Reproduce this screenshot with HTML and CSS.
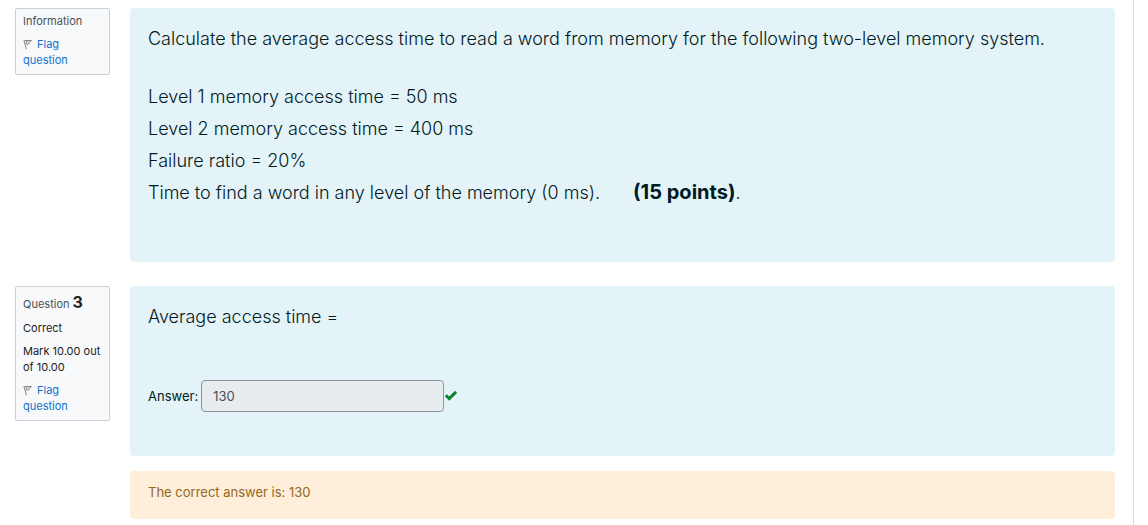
FILE: index.html
```html
<!DOCTYPE html>
<html lang="en">
<head>
<meta charset="utf-8">
<meta name="viewport" content="width=device-width, initial-scale=1">
<title>Quiz review</title>
<link rel="stylesheet" href="styles.css">
</head>
<body>
<main class="page">
  <section class="question">
    <aside class="info">
      <h3 class="info-title">Information</h3>
      <a class="flag" href="#"><svg class="flag-icon" viewBox="0 0 10 11" aria-hidden="true"><path class="cloth" d="M1.4 1.5H8.4L4.2 6.2" /><path d="M.9 1.2 3.4 10.2M4 2.2 3 5.4" /></svg>Flag question</a>
    </aside>
    <div class="content">
      <div class="formulation description">
        <p class="lead">Calculate the average access time to read a word from memory for the following two-level memory system.</p>
        <p class="lead">Level 1 memory access time = 50 ms<br>Level 2 memory access time = 400 ms<br>Failure ratio = 20%<br>Time to find a word in any level of the memory (0 ms). <strong class="points">(15 points)</strong>.</p>
      </div>
    </div>
  </section>
  <section class="question">
    <aside class="info">
      <h3 class="info-title numbered">Question <span class="number">3</span></h3>
      <div>Correct</div>
      <div>Mark 10.00 out of 10.00</div>
      <a class="flag" href="#"><svg class="flag-icon" viewBox="0 0 10 11" aria-hidden="true"><path class="cloth" d="M1.4 1.5H8.4L4.2 6.2" /><path d="M.9 1.2 3.4 10.2M4 2.2 3 5.4" /></svg>Flag question</a>
    </aside>
    <div class="content">
      <div class="formulation response">
        <p class="lead">Average access time =</p>
        <div class="answer">
          <label for="answer">Answer:</label>
          <input id="answer" class="answer-input" type="text" value="130" readonly>
          <svg class="check" viewBox="0 0 14 12" role="img" aria-label="Correct"><path d="M.8 6.2 2.8 4.2 5.2 6.6 11 .8 13.1 2.9 5.2 10.8Z" /></svg>
        </div>
      </div>
      <div class="outcome">The correct answer is: 130</div>
    </div>
  </section>
</main>
</body>
</html>
```
FILE: styles.css
```css
* { box-sizing: border-box; }

body {
  margin: 0;
  background: #fff;
  color: #001a1e;
  font-family: Inter, "Liberation Sans", sans-serif;
  font-size: 13px;
  line-height: 20px;
}

.page {
  display: flex;
  flex-direction: column;
  gap: 24px;
  min-height: 100vh;
  margin-right: 14px;
  padding: 8px 18px 6px 15px;
  border-right: 1px solid #d8dadc;
}

.question {
  display: flex;
  align-items: flex-start;
  gap: 20px;
}

.info {
  display: flex;
  flex: 0 0 95px;
  flex-direction: column;
  gap: 7px;
  padding: 4px 7px 6px;
  border: 1px solid #cad0d7;
  border-radius: 2px;
  background: #f8f9fa;
  color: #1d2125;
  font-size: 11px;
  line-height: 16px;
}

.info-title {
  margin: 0;
  color: #495057;
  font-size: 11px;
  font-weight: 400;
}

.numbered {
  padding-top: 3px;
  line-height: 17px;
}

.number {
  color: #1d2125;
  font-size: 16px;
  font-weight: 700;
  line-height: 16px;
}

.flag {
  color: #1173cc;
  text-decoration: none;
}

.flag-icon {
  width: 10px;
  height: 11px;
  margin-right: 4px;
  vertical-align: -2px;
  fill: none;
  stroke: #858585;
  stroke-width: 1;
}

.cloth { fill: #ddd; }

.content {
  display: flex;
  flex: 1;
  flex-direction: column;
  gap: 15px;
  min-width: 0;
}

.formulation {
  padding: 15px 18px;
  border-radius: 4px;
  background: #e4f3f7;
}

.description {
  display: flex;
  flex-direction: column;
  gap: 26px;
  padding-bottom: 53px;
}

.response { padding-bottom: 44px; }

.lead {
  margin: 0;
  font-size: 18px;
  font-weight: 300;
  line-height: 32px;
}

.points {
  margin-left: 28px;
  font-size: 20px;
  font-weight: 700;
  line-height: 28px;
}

.answer {
  display: flex;
  align-items: center;
  margin-top: 47px;
}

.answer-input {
  width: 243px;
  height: 32px;
  margin-left: 3px;
  padding: 0 11px;
  border: 1px solid #8f959e;
  border-radius: 4px;
  background: #e9ecef;
  color: #495057;
  font: inherit;
}

.check {
  width: 14px;
  height: 12px;
  fill: #0a8230;
}

.outcome {
  padding: 11px 18px 17px;
  border-radius: 4px;
  background: #ffeeda;
  color: #93681f;
}
```
